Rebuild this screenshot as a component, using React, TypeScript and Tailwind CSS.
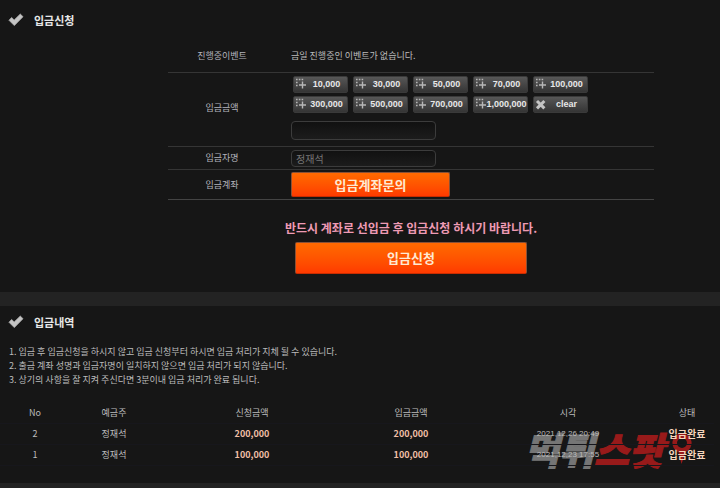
import type { ReactNode } from "react";
import clsx from "clsx";

const amounts = [
   "10,000",
   "30,000",
   "50,000",
   "70,000",
   "100,000",
   "300,000",
   "500,000",
   "700,000",
   "1,000,000",
];

const notices = [
   "1. 입금 후 입금신청을 하시지 않고 입금 신청부터 하시면 입금 처리가 지체 될 수 있습니다.",
   "2. 출금 계좌 성명과 입금자명이 일치하지 않으면 입금 처리가 되지 않습니다.",
   "3. 상기의 사항을 잘 지켜 주신다면 3분이내 입금 처리가 완료 됩니다.",
];

const columns = [
   { label: "No", width: "w-[70px]" },
   { label: "예금주", width: "w-[88px]" },
   { label: "신청금액", width: "w-[188px]" },
   { label: "입금금액", width: "w-[130px]" },
   { label: "시각", width: "w-[184px]" },
   { label: "상태", width: "w-[54px]" },
];

const deposits = [
   { no: 2, name: "정재석", amount: "200,000", date: "2021,12,26 20:49" },
   { no: 1, name: "정재석", amount: "100,000", date: "2021,12,23 17:55" },
];

const inputClass =
   "block w-[145px] rounded border border-[#3c3c3c] bg-linear-to-b from-[#111111] to-[#1c1c1c] px-1 text-[10px] text-[#777777] outline-none";

const orangeButton =
   "block rounded-xs border border-[#8a5136] border-b-[#c92c00] bg-linear-to-b from-[#ff6a00] to-[#ff3a00] text-[13px] font-bold text-[#ffe9d2]";

function SectionTitle({ children }: { children: ReactNode }) {
   return (
      <h2 className="flex items-center gap-2.5 pl-2 text-[11px] leading-4 font-bold text-[#e6e6e6]">
         <svg className="h-4 w-4" viewBox="0 0 16 16" aria-hidden="true">
            <path
               d="M1 8.3 L3.6 5.5 L6.2 8 L12.3 2.1 L15 4.7 L6.3 13.6 Z"
               fill="#c4c4c4"
               stroke="#b0b0b0"
               strokeWidth="0.8"
               strokeLinejoin="round"
            />
         </svg>
         {children}
      </h2>
   );
}

function PlusIcon() {
   return (
      <svg
         className="h-[13px] w-[11px] shrink-0"
         viewBox="0 0 11 13"
         fill="none"
         aria-hidden="true"
      >
         <path
            d="M1 1.5h8M1 4.5h2M1 7.5h2"
            stroke="#b4b4b4"
            strokeWidth="1.4"
            strokeDasharray="1.6 1.2"
         />
         <path d="M7.5 3.5v7M4 7h7" stroke="#b8b8b8" strokeWidth="1.4" />
      </svg>
   );
}

function ClearIcon() {
   return (
      <svg className="h-[13px] w-[11px] shrink-0" viewBox="0 0 11 13" aria-hidden="true">
         <path
            d="M2 3l7.4 7.4M9.4 3L2 10.4"
            stroke="#c4c4c4"
            strokeWidth="3"
            fill="none"
         />
      </svg>
   );
}

function AmountButton({ icon, children }: { icon: ReactNode; children: ReactNode }) {
   return (
      <button
         type="button"
         className="flex h-[17px] items-center rounded-xs border border-[#3a3a3a] bg-linear-to-b from-[#575757] to-[#353535] pl-px font-['Liberation_Sans',sans-serif] text-[9px] font-bold text-[#e8e8e8]"
      >
         {icon}
         <span className="min-w-0 flex-1 text-center">{children}</span>
      </button>
   );
}

function Row({
   label,
   htmlFor,
   last,
   className,
   children,
}: {
   label: string;
   htmlFor?: string;
   last?: boolean;
   className: string;
   children: ReactNode;
}) {
   return (
      <div
         className={clsx(
            "flex items-center border-b",
            last ? "border-[#444444]" : "border-[#353535]",
            className
         )}
      >
         <div className="w-[123px] shrink-0 pr-[15px] text-center text-[#b4b4bc]">
            {htmlFor ? <label htmlFor={htmlFor}>{label}</label> : label}
         </div>
         <div className="flex-1">{children}</div>
      </div>
   );
}

function Watermark() {
   return (
      <div
         aria-hidden="true"
         className="pointer-events-none absolute right-7 bottom-3.5 flex items-center text-[38px] leading-10 font-black italic select-none"
      >
         <span className="text-[#757575] [-webkit-text-stroke:1px_#757575]">먹튀</span>
         <span className="text-[#981a1a] [-webkit-text-stroke:1px_#981a1a]">스팟</span>
         <svg className="ml-2 h-8 w-5" viewBox="0 0 20 32">
            <path
               d="M10 0a10 10 0 0 0-3.5 19.2L9.5 31l4-11.8A10 10 0 0 0 10 0Zm0 5a5 5 0 1 1 0 10a5 5 0 0 1 0-10Z"
               fill="#981a1a"
               fillRule="evenodd"
            />
         </svg>
      </div>
   );
}

export default function App() {
   return (
      <main className="min-h-screen bg-[#232323] font-['Noto_Sans_CJK_KR',sans-serif] text-[9px] leading-[14px] text-[#bcbcbc]">
         <section className="bg-[#161616] pt-3 pb-[18px]">
            <SectionTitle>입금신청</SectionTitle>
            <form className="pt-3 pl-[102px]" onSubmit={(e) => e.preventDefault()}>
               <div className="mx-auto w-full max-w-[486px]">
                  <Row label="진행중이벤트" className="h-[33px]">
                     금일 진행중인 이벤트가 없습니다.
                  </Row>
                  <Row label="입금금액" htmlFor="amount" className="h-[74px] pb-1">
                     <div className="grid grid-cols-[repeat(5,55px)] gap-x-[5px] gap-y-[3px] pl-0.5">
                        {amounts.map((amount) => (
                           <AmountButton key={amount} icon={<PlusIcon />}>
                              {amount}
                           </AmountButton>
                        ))}
                        <AmountButton icon={<ClearIcon />}>clear</AmountButton>
                     </div>
                     <input
                        id="amount"
                        type="text"
                        className={clsx(inputClass, "mt-2 h-[19px]")}
                     />
                  </Row>
                  <Row label="입금자명" htmlFor="depositor" className="h-[23px]">
                     <input
                        id="depositor"
                        type="text"
                        defaultValue="정재석"
                        className={clsx(inputClass, "h-[17px]")}
                     />
                  </Row>
                  <Row label="입금계좌" last className="h-[30px]">
                     <button
                        type="button"
                        className={clsx(orangeButton, "h-[25px] w-[159px]")}
                     >
                        입금계좌문의
                     </button>
                  </Row>
                  <p className="mt-[18px] text-center text-[12px] leading-5 font-bold text-[#ee9ab4]">
                     반드시 계좌로 선입금 후 입금신청 하시기 바랍니다.
                  </p>
                  <button
                     type="submit"
                     className={clsx(orangeButton, "mx-auto mt-1 h-8 w-[232px]")}
                  >
                     입금신청
                  </button>
               </div>
            </form>
         </section>

         <section className="relative mt-3.5 bg-[#161616] pt-2 pb-[17px]">
            <SectionTitle>입금내역</SectionTitle>
            <div className="pt-[15px] pl-[9px]">
               {notices.map((notice) => (
                  <p key={notice}>{notice}</p>
               ))}
            </div>
            <Watermark />
            <div className="relative mt-4 pr-1.5">
               <table className="w-full table-fixed text-center">
                  <thead>
                     <tr className="h-5">
                        {columns.map(({ label, width }) => (
                           <th key={label} className={clsx(width, "p-0 font-normal")}>
                              {label}
                           </th>
                        ))}
                     </tr>
                  </thead>
                  <tbody>
                     {deposits.map(({ no, name, amount, date }) => (
                        <tr key={no} className="h-[21px] border-y border-[#17171c]">
                           <td className="p-0">{no}</td>
                           <td className="p-0">{name}</td>
                           <td className="p-0 font-bold text-[#f0bfa6]">{amount}</td>
                           <td className="p-0 font-bold text-[#f0bfa6]">{amount}</td>
                           <td className="p-0 font-['Liberation_Sans',sans-serif] text-[8px]">
                              {date}
                           </td>
                           <td className="p-0 text-[10px] leading-[14px] font-bold whitespace-nowrap text-[#f5d5bd]">
                              입금완료
                           </td>
                        </tr>
                     ))}
                  </tbody>
               </table>
            </div>
         </section>
      </main>
   );
}
